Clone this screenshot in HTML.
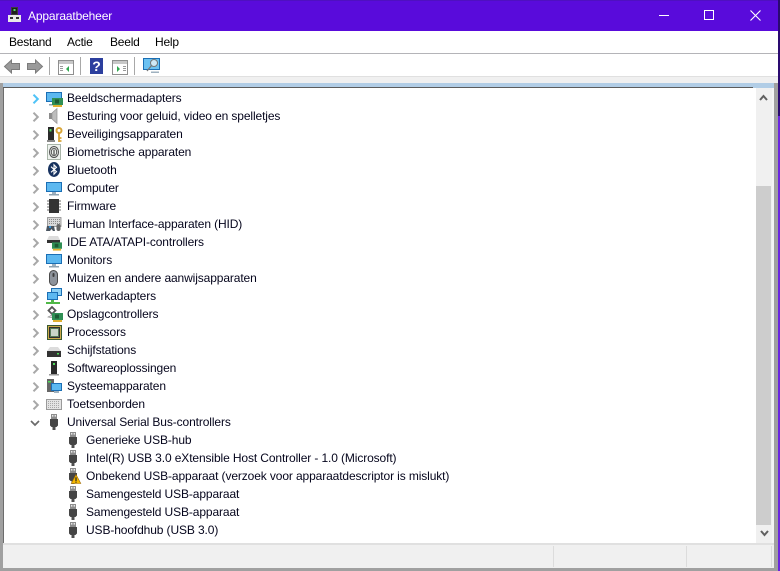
<!DOCTYPE html>
<html lang="nl"><head><meta charset="utf-8"><title>Apparaatbeheer</title>
<style>
html,body{margin:0;padding:0;width:780px;height:571px;overflow:hidden;background:#fff}
body{position:relative;font-family:"Liberation Sans",sans-serif;font-size:12px;color:#000}
.a{position:absolute}
.t{position:absolute;white-space:nowrap;line-height:18px;height:18px;color:#05051c;letter-spacing:-.115px}
.m{position:absolute;top:34px;line-height:16px;white-space:nowrap;color:#000;letter-spacing:-.22px}
svg{position:absolute;overflow:visible}
</style></head><body>
<svg width="0" height="0" style="position:absolute">
<defs>
<symbol id="mon" viewBox="0 0 16 16"><rect x="0" y="1" width="16" height="10" fill="#1b6fb5"/><rect x="1" y="2" width="14" height="8" fill="#5cb8f0"/><rect x="6" y="11" width="4" height="2" fill="#9fb1bf"/><rect x="3" y="13" width="10" height="1.500" fill="#8fa3b2"/></symbol>
<symbol id="usb" viewBox="0 0 16 16"><rect x="5" y="0" width="6" height="5" fill="#8c8c8c"/><rect x="6" y="1" width="1.400" height="1.600" fill="#e8e8e8"/><rect x="8.600" y="1" width="1.400" height="1.600" fill="#e8e8e8"/><path d="M4 5h8v6.500l-1.500 1.500h-5L4 11.500z" fill="#454545"/><rect x="6.500" y="13" width="3" height="3" fill="#4f4f4f"/></symbol>
<symbol id="card" viewBox="0 0 11 9"><rect width="11" height="7" fill="#2f8f55"/><rect x="3" y="1.500" width="4" height="4" fill="#1c5a35"/><rect x="1" y="7" width="9" height="2" fill="#e0b030"/></symbol>
<symbol id="cr" viewBox="0 0 8 10"><path d="M1.500 .7l4.300 4.300-4.300 4.300" fill="none" stroke="#a8a8a8" stroke-width="2"/></symbol>
</defs></svg>

<!-- title bar -->
<div class="a" style="left:0;top:0;width:778px;height:31px;background:#590bdb"></div>
<div class="a" style="left:0;top:0;width:778px;height:1px;background:#4f10c0"></div>
<svg style="left:8px;top:7px" width="13" height="15" viewBox="0 0 13 15"><rect x="3" y="0" width="7" height="8" fill="#3c3c3c"/><rect x="4" y="1" width="5" height="6" fill="#1e1e1e"/><rect x="5.500" y="2" width="2" height="2" fill="#4fdc5a"/><rect x="0" y="8" width="13" height="7" fill="#e8e8e8"/><rect x="2" y="10" width="3" height="2" fill="#333"/><rect x="8" y="10" width="3" height="2" fill="#333"/></svg>
<div class="a" style="left:28px;top:8px;line-height:16px;color:#fff;white-space:nowrap;letter-spacing:-.14px">Apparaatbeheer</div>
<div class="a" style="left:659px;top:15px;width:10px;height:1px;background:#fff"></div>
<div class="a" style="left:704px;top:10px;width:8px;height:8px;border:1px solid #fff"></div>
<svg style="left:750px;top:10px" width="11" height="11" viewBox="0 0 11 11"><path d="M.5.500l10 10M10.500.500l-10 10" stroke="#fff" stroke-width="1.100" fill="none"/></svg>

<!-- right edge -->
<div class="a" style="left:778px;top:0;width:2px;height:116px;background:#2a0a70"></div>
<div class="a" style="left:778px;top:116px;width:2px;height:455px;background:#6a25e0"></div>

<!-- menu -->
<div class="m" style="left:9px">Bestand</div>
<div class="m" style="left:67px">Actie</div>
<div class="m" style="left:110px">Beeld</div>
<div class="m" style="left:155px">Help</div>
<div class="a" style="left:0;top:53px;width:778px;height:1px;background:#b4b4b8"></div>

<!-- toolbar -->
<svg style="left:4px;top:59px" width="16" height="15" viewBox="0 0 16 15"><path d="M.5 7.500L7.500 1v3.500h8v6h-8V14z" fill="#9a9a9a" stroke="#7c7c7c"/></svg>
<svg style="left:27px;top:59px" width="16" height="15" viewBox="0 0 16 15"><path d="M15.500 7.500L8.500 1v3.500h-8v6h8V14z" fill="#9a9a9a" stroke="#7c7c7c"/></svg>
<div class="a" style="left:49px;top:57px;width:1px;height:18px;background:#a8a8a8"></div>
<svg style="left:58px;top:60px" width="16" height="15" viewBox="0 0 16 15"><rect x=".5" y=".5" width="15" height="14" fill="#fff" stroke="#8f8f8f"/><rect x="1" y="1" width="14" height="3" fill="#c8c8c8"/><rect x="2" y="6" width="3" height="1" fill="#999"/><rect x="2" y="8" width="3" height="1" fill="#999"/><rect x="2" y="10" width="3" height="1" fill="#999"/><path d="M11 6v6L8 9z" fill="#2fa84f"/></svg>
<div class="a" style="left:80px;top:57px;width:1px;height:18px;background:#a8a8a8"></div>
<div class="a" style="left:90px;top:58px;width:13px;height:16px;background:#2c3f9e;color:#fff;font-weight:bold;font-size:14px;line-height:16px;text-align:center">?</div>
<svg style="left:112px;top:60px" width="16" height="15" viewBox="0 0 16 15"><rect x=".5" y=".5" width="15" height="14" fill="#fff" stroke="#8f8f8f"/><rect x="1" y="1" width="14" height="3" fill="#c8c8c8"/><rect x="11" y="6" width="3" height="1" fill="#999"/><rect x="11" y="8" width="3" height="1" fill="#999"/><rect x="11" y="10" width="3" height="1" fill="#999"/><path d="M5 6v6l3-3z" fill="#2fa84f"/></svg>
<div class="a" style="left:134px;top:57px;width:1px;height:18px;background:#a8a8a8"></div>
<svg style="left:143px;top:58px" width="17" height="17" viewBox="0 0 17 17"><rect x=".5" y=".5" width="16" height="11" fill="#6cc2f2" stroke="#1b6fb5"/><circle cx="11" cy="5" r="3.500" fill="#cfe9f7" stroke="#777"/><path d="M8.500 7.500L4 13" stroke="#777" stroke-width="1.300"/><rect x="8" y="13.500" width="8" height="1.500" fill="#9fb1bf"/></svg>

<!-- frame -->
<div class="a" style="left:0;top:76px;width:778px;height:1px;background:#e0e0e0"></div>
<div class="a" style="left:0;top:77px;width:778px;height:6px;background:#f0f0f0"></div>
<div class="a" style="left:3px;top:83px;width:771px;height:5px;background:#b1cde6"></div>
<div class="a" style="left:3px;top:87px;width:750px;height:1px;background:#5c5c5c"></div>
<div class="a" style="left:0;top:83px;width:3px;height:488px;background:#a0a0a0"></div>
<div class="a" style="left:3px;top:88px;width:1px;height:455px;background:#6d6d6d"></div>
<div class="a" style="left:774px;top:83px;width:4px;height:488px;background:#a0a0a0"></div>
<div class="a" style="left:0;top:568px;width:778px;height:3px;background:#a0a0a0"></div>

<!-- scrollbar -->
<div class="a" style="left:756px;top:88px;width:16px;height:455px;background:#f0f0f0"></div>
<div class="a" style="left:772px;top:88px;width:2px;height:455px;background:#f5f5f5"></div>
<div class="a" style="left:756px;top:186px;width:15px;height:339px;background:#cdcdcd"></div>
<svg style="left:759px;top:94px" width="9" height="7" viewBox="0 0 9 7"><path d="M1 6l3.500-4L8 6" fill="none" stroke="#606060" stroke-width="2"/></svg>
<svg style="left:760px;top:530px" width="9" height="7" viewBox="0 0 9 7"><path d="M1 1l3.500 4L8 1" fill="none" stroke="#606060" stroke-width="2"/></svg>

<!-- status bar -->
<div class="a" style="left:3px;top:543px;width:771px;height:2px;background:#e0e0e0"></div>
<div class="a" style="left:3px;top:545px;width:771px;height:23px;background:#f0f0f0"></div>
<div class="a" style="left:553px;top:546px;width:1px;height:21px;background:#dcdcdc"></div>
<div class="a" style="left:686px;top:546px;width:1px;height:21px;background:#dcdcdc"></div>
<div class="a" style="left:771px;top:546px;width:1px;height:21px;background:#dcdcdc"></div>

<!-- chevrons -->
<svg style="left:32px;top:94px" width="8" height="10" viewBox="0 0 8 10"><path d="M1.500 .7l4.300 4.300-4.300 4.300" fill="none" stroke="#4fc3f7" stroke-width="2"/></svg>
<svg style="left:32px;top:112px" width="8" height="10"><use href="#cr"/></svg>
<svg style="left:32px;top:130px" width="8" height="10"><use href="#cr"/></svg>
<svg style="left:32px;top:148px" width="8" height="10"><use href="#cr"/></svg>
<svg style="left:32px;top:166px" width="8" height="10"><use href="#cr"/></svg>
<svg style="left:32px;top:184px" width="8" height="10"><use href="#cr"/></svg>
<svg style="left:32px;top:202px" width="8" height="10"><use href="#cr"/></svg>
<svg style="left:32px;top:220px" width="8" height="10"><use href="#cr"/></svg>
<svg style="left:32px;top:238px" width="8" height="10"><use href="#cr"/></svg>
<svg style="left:32px;top:256px" width="8" height="10"><use href="#cr"/></svg>
<svg style="left:32px;top:274px" width="8" height="10"><use href="#cr"/></svg>
<svg style="left:32px;top:292px" width="8" height="10"><use href="#cr"/></svg>
<svg style="left:32px;top:310px" width="8" height="10"><use href="#cr"/></svg>
<svg style="left:32px;top:328px" width="8" height="10"><use href="#cr"/></svg>
<svg style="left:32px;top:346px" width="8" height="10"><use href="#cr"/></svg>
<svg style="left:32px;top:364px" width="8" height="10"><use href="#cr"/></svg>
<svg style="left:32px;top:382px" width="8" height="10"><use href="#cr"/></svg>
<svg style="left:32px;top:400px" width="8" height="10"><use href="#cr"/></svg>
<svg style="left:30px;top:420px" width="10" height="7" viewBox="0 0 10 7"><path d="M1 1l4 4 4-4" fill="none" stroke="#6a6a6a" stroke-width="1.700"/></svg>

<!-- icons -->
<svg style="left:46px;top:91px" width="16" height="16"><use href="#mon"/></svg><svg style="left:52px;top:98px" width="11" height="9"><use href="#card"/></svg>
<svg style="left:47px;top:108px" width="12" height="16" viewBox="0 0 12 16"><rect x="2" y="5" width="3.500" height="6" fill="#8c8c8c"/><path d="M5 5l5-4.500v15L5 11z" fill="#bdbdbd" stroke="#929292" stroke-width=".7"/></svg>
<svg style="left:47px;top:127px" width="16" height="16" viewBox="0 0 16 16"><rect x="1" y="0" width="6" height="13" fill="#2a2a2a"/><rect x="2.500" y="2" width="2" height="2.500" fill="#4fdc5a"/><rect x="0" y="13" width="8" height="2" fill="#888"/><circle cx="12" cy="3.500" r="2.500" fill="none" stroke="#d9a63a" stroke-width="2"/><path d="M12 6v9M12 11h2.500M12 14h2.500" stroke="#d9a63a" stroke-width="1.800"/></svg>
<svg style="left:47px;top:144px" width="14" height="16" viewBox="0 0 14 16"><rect x=".5" y=".5" width="13" height="15" fill="#eef2ee" stroke="#a9b5a9"/><ellipse cx="7" cy="8" rx="4.500" ry="5.500" fill="none" stroke="#555" stroke-width="1.100"/><ellipse cx="7" cy="8" rx="2.700" ry="3.700" fill="none" stroke="#555"/><path d="M7 5.500v5.500" stroke="#555" stroke-width="1.300"/></svg>
<svg style="left:48px;top:162px" width="12" height="15" viewBox="0 0 12 15"><ellipse cx="6" cy="7.500" rx="6" ry="7.500" fill="#17325f"/><path d="M3 4.700l5.500 5L6 12.200V2.800l2.500 2.500-5.500 5" fill="none" stroke="#fff" stroke-width="1.100"/></svg>
<svg style="left:46px;top:181px" width="16" height="16"><use href="#mon"/></svg>
<svg style="left:47px;top:198px" width="14" height="16" viewBox="0 0 14 16"><rect x="2" y="1" width="10" height="14" fill="#333"/><path d="M0 3h2M0 6h2M0 9h2M0 12h2M12 3h2M12 6h2M12 9h2M12 12h2" stroke="#8a8a8a" stroke-width="1.200"/></svg>
<svg style="left:46px;top:216px" width="16" height="16" viewBox="0 0 16 16"><rect x="1.500" y="1.500" width="13.500" height="9" fill="#d8d8d8" stroke="#8c8c8c" stroke-width=".8"/><path d="M3 3.500h11M3 5.500h11M3 7.500h11" stroke="#8a8a8a" stroke-dasharray="1 1"/><path d="M1 10h7l1 5H7L5.500 13 4 15H0z" fill="#4a5560"/><rect x="3" y="10" width="2" height="2" fill="#3a8fd0"/><rect x="10.500" y="8" width="4" height="7" rx="2" fill="#666"/></svg>
<svg style="left:47px;top:235px" width="15" height="16" viewBox="0 0 15 16"><path d="M2 1h9l2 4H0z" fill="#dcdcdc"/><rect x="0" y="5" width="13" height="3" fill="#333"/></svg><svg style="left:52px;top:242px" width="10" height="9"><use href="#card"/></svg>
<svg style="left:46px;top:253px" width="16" height="16"><use href="#mon"/></svg>
<svg style="left:47px;top:270px" width="13" height="16" viewBox="0 0 13 16"><rect x="2.500" y=".5" width="8" height="15" rx="4" fill="#8d939b" stroke="#4a4a4a"/><rect x="5.500" y="3" width="2" height="4" rx="1" fill="#3c3c3c"/></svg>
<svg style="left:46px;top:288px" width="16" height="16" viewBox="0 0 16 16"><rect x="5" y="0" width="11" height="8" fill="#1b6fb5"/><rect x="6" y="1" width="9" height="6" fill="#8cd0f5"/><rect x="1" y="4" width="11" height="8" fill="#1b6fb5"/><rect x="2" y="5" width="9" height="6" fill="#5cb8f0"/><rect x="5" y="12" width="3" height="2" fill="#50b848"/><rect x="0" y="14" width="14" height="2" fill="#50b848"/></svg>
<svg style="left:47px;top:306px" width="16" height="16" viewBox="0 0 16 16"><path d="M5 1l3.500 3.500L5 8 1.500 4.500z" fill="none" stroke="#555" stroke-width="1.800"/><path d="M1 11l6-3h5v4H7z" fill="#ddd" stroke="#777" stroke-width=".6"/></svg><svg style="left:52px;top:313px" width="11" height="9"><use href="#card"/></svg>
<svg style="left:47px;top:325px" width="15" height="15" viewBox="0 0 15 15"><rect x=".5" y=".5" width="14" height="14" fill="#c9a94a" stroke="#3c5a30"/><rect x="2.500" y="2.500" width="10" height="10" fill="#567a58" stroke="#2e2e2e"/><rect x="4" y="4" width="7" height="7" fill="#c8d4c8"/></svg>
<svg style="left:47px;top:342px" width="15" height="16" viewBox="0 0 15 16"><path d="M3 5h8l3 4H0z" fill="#dcdcdc"/><rect x="0" y="9" width="14" height="6" fill="#333"/><rect x="10" y="11" width="2" height="1.500" fill="#4fdc5a"/></svg>
<svg style="left:47px;top:360px" width="14" height="16" viewBox="0 0 14 16"><rect x="4" y="1" width="6" height="13" fill="#2a2a2a"/><rect x="6" y="3" width="2" height="2" fill="#4fdc5a"/><rect x="2" y="14" width="10" height="1.500" fill="#999"/></svg>
<svg style="left:46px;top:378px" width="16" height="16" viewBox="0 0 16 16"><rect x="1" y="1" width="7" height="13" fill="#666"/><rect x="2" y="3" width="3" height="1.500" fill="#4fdc5a"/><rect x="5" y="5" width="11" height="8" fill="#1b6fb5"/><rect x="6" y="6" width="9" height="6" fill="#5cb8f0"/><rect x="8" y="13" width="5" height="2" fill="#9fb1bf"/></svg>
<svg style="left:46px;top:396px" width="16" height="16" viewBox="0 0 16 16"><rect x=".5" y="3.500" width="15" height="10" fill="#e4e4e4" stroke="#9a9a9a"/><path d="M2 5.500h12M2 7.500h12M2 9.500h12M2 11.500h12" stroke="#a8a8a8" stroke-dasharray="1 1"/></svg>
<svg style="left:46px;top:414px" width="16" height="16"><use href="#usb"/></svg>
<svg style="left:65px;top:432px" width="16" height="16"><use href="#usb"/></svg>
<svg style="left:65px;top:450px" width="16" height="16"><use href="#usb"/></svg>
<svg style="left:65px;top:468px" width="16" height="16"><use href="#usb"/></svg>
<svg style="left:71px;top:474px" width="10" height="10" viewBox="0 0 10 10"><path d="M5 .5L9.800 9.500H.2z" fill="#f5b800" stroke="#a06a00" stroke-width=".6"/><rect x="4.400" y="3.300" width="1.200" height="3.700" fill="#222"/><rect x="4.400" y="7.600" width="1.200" height="1.100" fill="#222"/></svg>
<svg style="left:65px;top:486px" width="16" height="16"><use href="#usb"/></svg>
<svg style="left:65px;top:504px" width="16" height="16"><use href="#usb"/></svg>
<svg style="left:65px;top:522px" width="16" height="16"><use href="#usb"/></svg>

<!-- labels -->
<div class="t" style="left:67px;top:89px">Beeldschermadapters</div>
<div class="t" style="left:67px;top:107px">Besturing voor geluid, video en spelletjes</div>
<div class="t" style="left:67px;top:125px">Beveiligingsapparaten</div>
<div class="t" style="left:67px;top:143px">Biometrische apparaten</div>
<div class="t" style="left:67px;top:161px">Bluetooth</div>
<div class="t" style="left:67px;top:179px">Computer</div>
<div class="t" style="left:67px;top:197px">Firmware</div>
<div class="t" style="left:67px;top:215px">Human Interface-apparaten (HID)</div>
<div class="t" style="left:67px;top:233px">IDE ATA/ATAPI-controllers</div>
<div class="t" style="left:67px;top:251px">Monitors</div>
<div class="t" style="left:67px;top:269px">Muizen en andere aanwijsapparaten</div>
<div class="t" style="left:67px;top:287px">Netwerkadapters</div>
<div class="t" style="left:67px;top:305px">Opslagcontrollers</div>
<div class="t" style="left:67px;top:323px">Processors</div>
<div class="t" style="left:67px;top:341px">Schijfstations</div>
<div class="t" style="left:67px;top:359px">Softwareoplossingen</div>
<div class="t" style="left:67px;top:377px">Systeemapparaten</div>
<div class="t" style="left:67px;top:395px">Toetsenborden</div>
<div class="t" style="left:67px;top:413px">Universal Serial Bus-controllers</div>
<div class="t" style="left:86px;top:431px">Generieke USB-hub</div>
<div class="t" style="left:86px;top:449px">Intel(R) USB 3.0 eXtensible Host Controller - 1.0 (Microsoft)</div>
<div class="t" style="left:86px;top:467px">Onbekend USB-apparaat (verzoek voor apparaatdescriptor is mislukt)</div>
<div class="t" style="left:86px;top:485px">Samengesteld USB-apparaat</div>
<div class="t" style="left:86px;top:503px">Samengesteld USB-apparaat</div>
<div class="t" style="left:86px;top:521px">USB-hoofdhub (USB 3.0)</div>
</body></html>
